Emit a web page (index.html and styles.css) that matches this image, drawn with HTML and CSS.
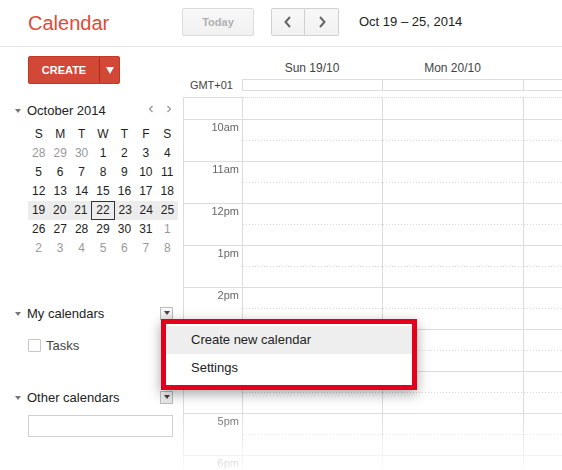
FILE: index.html
```html
<!DOCTYPE html>
<html lang="en">

<head>
    <meta charset="UTF-8">
    <meta name="viewport" content="width=device-width, initial-scale=1.0">
    <title>Calendar</title>
    <link rel="stylesheet" href="styles.css">
</head>

<body>
    <div class="app">
        <header class="topbar">
            <div class="logo">Calendar</div>
            <button class="btn btn-today">Today</button>
            <div class="nav-group">
                <button class="btn btn-nav"><svg width="10" height="14" viewBox="0 0 10 14"><path d="M7 2 2.5 7 7 12" fill="none" stroke="#666" stroke-width="2"/></svg></button>
                <button class="btn btn-nav"><svg width="10" height="14" viewBox="0 0 10 14"><path d="M3 2 7.5 7 3 12" fill="none" stroke="#666" stroke-width="2"/></svg></button>
            </div>
            <div class="range">Oct 19 – 25, 2014</div>
        </header>

        <div class="content">
            <aside class="sidebar">
                <div class="create">
                    <span class="create-label">CREATE</span>
                    <span class="create-more"><span class="tri-white"></span></span>
                </div>

                <div class="minical-head">
                    <span class="caret"></span>
                    <span class="minical-title">October 2014</span>
                    <span class="minical-nav">
                        <svg width="6" height="8" viewBox="0 0 6 8"><path d="M4.5 1 1.5 4l3 3" fill="none" stroke="#999" stroke-width="1.3"/></svg>
                        <svg width="6" height="8" viewBox="0 0 6 8"><path d="M1.5 1l3 3-3 3" fill="none" stroke="#999" stroke-width="1.3"/></svg>
                    </span>
                </div>

                <div class="minical">
                    <div class="mc-row"><span>S</span><span>M</span><span>T</span><span>W</span><span>T</span><span>F</span><span>S</span></div>
                    <div class="mc-row"><span class="off">28</span><span class="off">29</span><span class="off">30</span><span>1</span><span>2</span><span>3</span><span>4</span></div>
                    <div class="mc-row"><span>5</span><span>6</span><span>7</span><span>8</span><span>9</span><span>10</span><span>11</span></div>
                    <div class="mc-row"><span>12</span><span>13</span><span>14</span><span>15</span><span>16</span><span>17</span><span>18</span></div>
                    <div class="mc-row current"><span>19</span><span>20</span><span>21</span><span class="today">22</span><span>23</span><span>24</span><span>25</span></div>
                    <div class="mc-row"><span>26</span><span>27</span><span>28</span><span>29</span><span>30</span><span>31</span><span class="off">1</span></div>
                    <div class="mc-row"><span class="off">2</span><span class="off">3</span><span class="off">4</span><span class="off">5</span><span class="off">6</span><span class="off">7</span><span class="off">8</span></div>
                </div>

                <div class="section-head my-cals">
                    <span class="caret"></span>
                    <span>My calendars</span>
                    <span class="drop"><span class="tri-dark"></span></span>
                </div>
                <div class="cal-item">
                    <span class="checkbox"></span>
                    <span>Tasks</span>
                </div>

                <div class="section-head other-cals">
                    <span class="caret"></span>
                    <span>Other calendars</span>
                    <span class="drop"><span class="tri-dark"></span></span>
                </div>
                <div class="add-box"></div>
            </aside>

            <section class="week">
                <div class="wk-row day-heads">
                    <div></div>
                    <div>Sun 19/10</div>
                    <div>Mon 20/10</div>
                    <div></div>
                </div>
                <div class="wk-row allday">
                    <div class="tz">GMT+01</div>
                    <div class="ad"></div><div class="ad"></div><div class="ad"></div>
                </div>

                <div class="grid">
                    <div class="wk-row hour first">
                        <div class="label"></div>
                        <div class="slot"></div><div class="slot"></div><div class="slot"></div>
                    </div>
                    <div class="wk-row hour">
                        <div class="label">10am</div>
                        <div class="slot"></div><div class="slot"></div><div class="slot"></div>
                    </div>
                    <div class="wk-row hour">
                        <div class="label">11am</div>
                        <div class="slot"></div><div class="slot"></div><div class="slot"></div>
                    </div>
                    <div class="wk-row hour">
                        <div class="label">12pm</div>
                        <div class="slot"></div><div class="slot"></div><div class="slot"></div>
                    </div>
                    <div class="wk-row hour">
                        <div class="label">1pm</div>
                        <div class="slot"></div><div class="slot"></div><div class="slot"></div>
                    </div>
                    <div class="wk-row hour">
                        <div class="label">2pm</div>
                        <div class="slot"></div><div class="slot"></div><div class="slot"></div>
                    </div>
                    <div class="wk-row hour">
                        <div class="label">3pm</div>
                        <div class="slot"></div><div class="slot"></div><div class="slot"></div>
                    </div>
                    <div class="wk-row hour">
                        <div class="label">4pm</div>
                        <div class="slot"></div><div class="slot"></div><div class="slot"></div>
                    </div>
                    <div class="wk-row hour">
                        <div class="label">5pm</div>
                        <div class="slot"></div><div class="slot"></div><div class="slot"></div>
                    </div>
                    <div class="wk-row hour">
                        <div class="label">6pm</div>
                        <div class="slot"></div><div class="slot"></div><div class="slot"></div>
                    </div>
                </div>
            </section>
        </div>

        <div class="menu">
            <div class="menu-item active">Create new calendar</div>
            <div class="menu-item">Settings</div>
        </div>
    </div>
</body>

</html>
```

FILE: styles.css
```css
body {
    font-family: "Liberation Sans", Arial, sans-serif;
    margin: 0;
    padding: 0;
    background-color: #fff;
    color: #222;
    overflow: hidden;
}

.app {
    position: relative;
    display: flex;
    flex-direction: column;
    height: 470px;
    overflow: hidden;
}

/* top bar */

.topbar {
    display: flex;
    align-items: flex-start;
    height: 47px;
    padding-top: 8px;
    box-sizing: border-box;
    border-bottom: 1px solid #e5e5e5;
    flex: none;
}

.logo {
    width: 154px;
    padding-left: 28px;
    font-size: 20px;
    line-height: 30px;
    color: #dd4b39;
}

.btn {
    height: 28px;
    box-sizing: border-box;
    border: 1px solid #dcdcdc;
    border-radius: 2px;
    background: linear-gradient(#f8f8f8, #f1f1f1);
    font-family: inherit;
    padding: 0;
    margin: 0;
}

.btn-today {
    width: 72px;
    font-size: 11px;
    font-weight: bold;
    color: #b0b0b0;
}

.nav-group {
    display: flex;
    margin-left: 17px;
}

.btn-nav {
    width: 34px;
    display: flex;
    align-items: center;
    justify-content: center;
    border-color: #d0d0d0;
}

.btn-nav:first-child {
    border-radius: 2px 0 0 2px;
}

.btn-nav:last-child {
    border-left: none;
    border-radius: 0 2px 2px 0;
}

.range {
    margin-left: 20px;
    font-size: 13px;
    line-height: 28px;
    color: #222;
}

/* layout below bar */

.content {
    display: flex;
    flex: 1;
    min-height: 0;
}

.sidebar {
    width: 183px;
    flex: none;
}

.create {
    display: flex;
    width: 92px;
    height: 28px;
    margin: 9px 0 0 28px;
    box-sizing: border-box;
    background-color: #d14836;
    border: 1px solid #c53727;
    border-radius: 2px;
    color: #fff;
}

.create-label {
    width: 70px;
    text-align: center;
    font-size: 11px;
    font-weight: bold;
    line-height: 26px;
}

.create-more {
    flex: 1;
    border-left: 1px solid #b0281a;
    display: flex;
    align-items: center;
    justify-content: center;
}

.tri-white {
    border-left: 4px solid transparent;
    border-right: 4px solid transparent;
    border-top: 7px solid #fff;
}

.caret {
    width: 0;
    height: 0;
    border-left: 3.5px solid transparent;
    border-right: 3.5px solid transparent;
    border-top: 4px solid #777;
    margin-right: 6px;
    margin-top: 1px;
}

.minical-head {
    display: flex;
    align-items: center;
    height: 18px;
    margin-top: 17px;
    padding-left: 15px;
    font-size: 13px;
}

.minical-title {
    flex: 1;
}

.minical-nav {
    display: flex;
    gap: 12px;
    margin-right: 11px;
    margin-top: -3px;
}

.minical {
    width: 150px;
    margin: 6px 0 0 28px;
    font-size: 12px;
}

.mc-row {
    display: flex;
    height: 19px;
}

.mc-row span {
    flex: 1;
    text-align: center;
    line-height: 19px;
    box-sizing: border-box;
}

.mc-row.current {
    background-color: #ececec;
}

.mc-row .off {
    color: #999;
}

.mc-row .today {
    border: 1px solid #333;
    line-height: 17px;
}

.section-head {
    display: flex;
    align-items: center;
    height: 18px;
    padding-left: 15px;
    font-size: 13px;
}

.section-head.my-cals {
    margin-top: 46px;
}

.section-head.other-cals {
    margin-top: 33px;
}

.section-head .drop {
    margin-left: auto;
    margin-right: 10px;
    width: 13px;
    height: 13px;
    box-sizing: border-box;
    border: 1px solid #bcbcbc;
    background: linear-gradient(#fafafa, #e8e8e8);
    display: flex;
    align-items: center;
    justify-content: center;
}

.tri-dark {
    border-left: 3.5px solid transparent;
    border-right: 3.5px solid transparent;
    border-top: 4px solid #444;
}

.cal-item {
    display: flex;
    align-items: center;
    height: 19px;
    margin-top: 14px;
    padding-left: 28px;
    font-size: 13px;
    color: #444;
}

.checkbox {
    width: 13px;
    height: 13px;
    box-sizing: border-box;
    border: 1px solid #c6c6c6;
    border-radius: 1px;
    margin-right: 5px;
}

.add-box {
    width: 145px;
    height: 22px;
    margin: 9px 0 0 28px;
    box-sizing: border-box;
    border: 1px solid #d0d0d0;
}

/* week view */

.week {
    flex: 1;
    min-width: 0;
    overflow: hidden;
    display: flex;
    flex-direction: column;
}

.wk-row {
    display: grid;
    grid-template-columns: 59px 140px 141px 141px;
}

.day-heads {
    height: 32px;
    padding-top: 14px;
    box-sizing: border-box;
    font-size: 12px;
    line-height: 14px;
    color: #444;
    text-align: center;
}

.allday {
    height: 12px;
}

.tz {
    font-size: 11px;
    line-height: 12px;
    text-align: right;
    padding-right: 9px;
    color: #444;
}

.ad {
    border-top: 1px solid #dcdcdc;
    border-bottom: 1px solid #dcdcdc;
    border-left: 1px solid #dcdcdc;
}

.grid {
    flex: 1;
    min-height: 0;
    overflow: hidden;
    margin-top: 6px;
    -webkit-mask-image: linear-gradient(to bottom, #000 315px, rgba(0, 0, 0, 0.12) 372px);
    mask-image: linear-gradient(to bottom, #000 315px, rgba(0, 0, 0, 0.12) 372px);
}

.hour {
    height: 42px;
}

.hour.first {
    height: 22px;
}

.hour > div {
    border-top: 1px solid #dcdcdc;
    box-sizing: border-box;
}

.label {
    border-left: 1px solid #dcdcdc;
    text-align: right;
    padding-right: 3px;
    font-size: 11px;
    line-height: 14px;
    color: #666;
}

.slot {
    border-left: 1px solid #dcdcdc;
    background: repeating-linear-gradient(to right, #d8d8d8 0 1px, transparent 1px 3px) no-repeat 0 20px / 100% 1px;
}

.hour.first .slot {
    background: none;
    border-top: 1px dotted #d8d8d8;
}

/* popup menu */

.menu {
    position: absolute;
    left: 161px;
    top: 319px;
    width: 256px;
    box-sizing: border-box;
    border: 5px solid #e3001b;
    background-color: #fff;
    padding: 2px 0 3px;
    box-shadow: 0 4px 12px rgba(0, 0, 0, 0.35);
}

.menu-item {
    height: 28px;
    line-height: 28px;
    padding-left: 25px;
    font-size: 13px;
    color: #222;
}

.menu-item.active {
    background-color: #eee;
}
```
